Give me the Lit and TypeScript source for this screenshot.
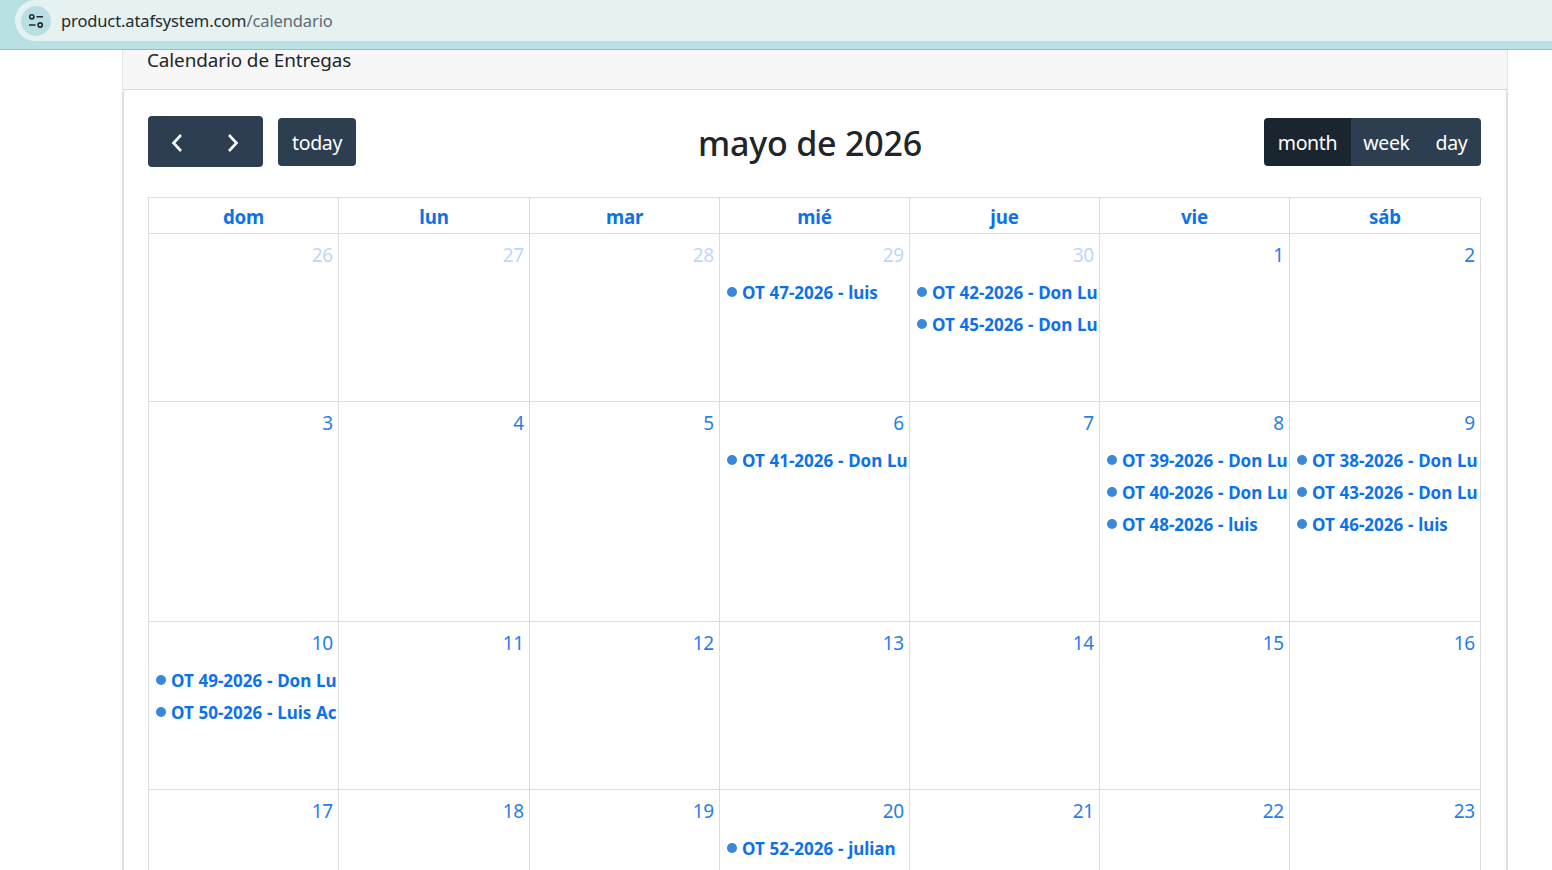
import { LitElement, html, css } from "lit";
import { customElement } from "lit/decorators.js";

type Cell = { d: number; other?: boolean; ev?: string[] };

const rows: { cls: string; cells: Cell[] }[] = [
  { cls: "short", cells: [
    { d: 26, other: true }, { d: 27, other: true }, { d: 28, other: true },
    { d: 29, other: true, ev: ["OT 47-2026 - luis"] },
    { d: 30, other: true, ev: ["OT 42-2026 - Don Lu", "OT 45-2026 - Don Lu"] },
    { d: 1 }, { d: 2 } ] },
  { cls: "tall", cells: [
    { d: 3 }, { d: 4 }, { d: 5 },
    { d: 6, ev: ["OT 41-2026 - Don Lu"] },
    { d: 7 },
    { d: 8, ev: ["OT 39-2026 - Don Lu", "OT 40-2026 - Don Lu", "OT 48-2026 - luis"] },
    { d: 9, ev: ["OT 38-2026 - Don Lu", "OT 43-2026 - Don Lu", "OT 46-2026 - luis"] } ] },
  { cls: "short", cells: [
    { d: 10, ev: ["OT 49-2026 - Don Lu", "OT 50-2026 - Luis Ac"] },
    { d: 11 }, { d: 12 }, { d: 13 }, { d: 14 }, { d: 15 }, { d: 16 } ] },
  { cls: "short", cells: [
    { d: 17 }, { d: 18 }, { d: 19 },
    { d: 20, ev: ["OT 52-2026 - julian"] },
    { d: 21 }, { d: 22 }, { d: 23 } ] },
];

const days = ["dom", "lun", "mar", "mié", "jue", "vie", "sáb"];

@customElement("app-root")
export class AppRoot extends LitElement {
  static styles = css`
    :host {
      display: block;
      height: 870px;
      overflow: hidden;
      background: #fff;
      font-family: "Noto Sans", "Open Sans", "Liberation Sans", sans-serif;
      color: #212529;
    }
    .chrome {
      height: 49px;
      background: #b9e0e3;
      border-bottom: 1px solid #9cbfc3;
      padding-left: 15px;
    }
    .omnibox {
      height: 41px;
      background: #e6f2f1;
      border-radius: 21px 0 0 21px;
      display: flex;
      align-items: center;
      padding-left: 6px;
      gap: 10px;
    }
    .site {
      width: 30px;
      height: 30px;
      border-radius: 50%;
      background: #b9dfe3;
      display: flex;
      align-items: center;
      justify-content: center;
    }
    .url {
      font-size: 16.5px;
      letter-spacing: -0.12px;
      color: #1f2a30;
    }
    .url span { color: #5f6b70; }
    .card {
      margin: 0 44px 0 122px;
    }
    .card-head {
      height: 39px;
      background: #f7f7f7;
      border: 1px solid #e6e6e6;
      border-top: none;
      border-bottom: 1px solid #dcdcdc;
      padding-left: 24px;
      font-size: 18.9px;
      line-height: 21px;
      letter-spacing: -0.1px;
      color: #212529;
    }
    .card-body {
      border: 2px solid #dfdfdf;
      border-top: none;
      border-bottom: none;
      border-radius: 4px 4px 0 0;
      padding: 26px 25px 0 24px;
    }
    .toolbar {
      display: flex;
      justify-content: space-between;
      align-items: center;
      height: 51px;
      margin-bottom: 30px;
    }
    .left { display: flex; align-items: center; gap: 15px; }
    .group {
      display: flex;
      border-radius: 4px;
      overflow: hidden;
    }
    .nav {
      width: 115px;
      height: 51px;
      background: #2c3e50;
      border-radius: 4px;
      display: flex;
      align-items: center;
      justify-content: space-between;
      padding: 2px 22px 0 21px;
      box-sizing: border-box;
    }
    .btn {
      height: 48px;
      background: #2c3e50;
      color: #fff;
      font-size: 19.5px;
      letter-spacing: -0.35px;
      padding-top: 1px;
      display: flex;
      align-items: center;
      justify-content: center;
      box-sizing: border-box;
    }
    .today { width: 78px; border-radius: 4px; }
    .month { width: 87px; background: #1a252f; }
    .week { width: 71px; }
    .day { width: 59px; }
    h2 {
      margin: 4px 0 0;
      font-size: 34px;
      font-weight: 500;
      letter-spacing: -0.2px;
      color: #212529;
      line-height: 1.2;
    }
    .cal {
      border-top: 1px solid #ddd;
      border-left: 1px solid #ddd;
    }
    .row {
      display: grid;
      grid-template-columns: 190px 191px 190px 190px 190px 190px 191px;
    }
    .short { height: 168px; }
    .tall { height: 220px; }
    .th, .td {
      border-right: 1px solid #ddd;
      border-bottom: 1px solid #ddd;
      min-width: 0;
      box-sizing: border-box;
    }
    .th {
      height: 36px;
      overflow: hidden;
      color: #0d72e8;
      font-weight: 700;
      font-size: 18.7px;
      letter-spacing: -0.2px;
      line-height: 38px;
      text-align: center;
    }
    .num {
      text-align: right;
      font-size: 19px;
      letter-spacing: -0.2px;
      line-height: 26px;
      padding: 8px 5px 0 0;
      height: 34px;
      color: #0d72e8;
      opacity: 0.9;
    }
    .other .num { opacity: 0.28; }
    .ev {
      display: flex;
      align-items: center;
      height: 32px;
      padding-left: 7px;
      overflow: hidden;
      white-space: nowrap;
      color: #0d72e8;
      font-size: 17px;
      font-weight: 700;
      letter-spacing: -0.02px;
      word-spacing: 0.4px;
    }
    .dot {
      flex: none;
      width: 10px;
      height: 10px;
      border-radius: 50%;
      background: #3a87dc;
      margin-right: 5px;
    }
  `;

  render() {
    return html`
      <div class="chrome">
        <div class="omnibox">
          <div class="site">
            <svg width="18" height="18" viewBox="0 0 18 18" fill="none" stroke="#1f2a30" stroke-width="1.6">
              <circle cx="4.8" cy="4.8" r="2.1"></circle>
              <path d="M9.5 4.8H16M2 13H8.5"></path>
              <circle cx="13.2" cy="13" r="2.1"></circle>
            </svg>
          </div>
          <div class="url">product.atafsystem.com<span>/calendario</span></div>
        </div>
      </div>
      <div class="card">
        <div class="card-head">Calendario de Entregas</div>
        <div class="card-body">
          <div class="toolbar">
            <div class="left">
              <div class="nav">
                <svg width="16" height="20" viewBox="0 0 16 20" fill="none" stroke="#fff" stroke-width="2.6">
                  <path d="M12 2 4.5 10l7.5 8"></path>
                </svg>
                <svg width="16" height="20" viewBox="0 0 16 20" fill="none" stroke="#fff" stroke-width="2.6">
                  <path d="M4 2 11.5 10 4 18"></path>
                </svg>
              </div>
              <div class="btn today">today</div>
            </div>
            <h2>mayo de 2026</h2>
            <div class="group">
              <div class="btn month">month</div>
              <div class="btn week">week</div>
              <div class="btn day">day</div>
            </div>
          </div>
          <div class="cal">
            <div class="row">
              ${days.map((d) => html`<div class="th">${d}</div>`)}
            </div>
            ${rows.map(
              (r) => html`
                <div class="row ${r.cls}">
                  ${r.cells.map(
                    (c) => html`
                      <div class="td ${c.other ? "other" : ""}">
                        <div class="num">${c.d}</div>
                        ${(c.ev ?? []).map(
                          (e) => html`<div class="ev"><span class="dot"></span>${e}</div>`
                        )}
                      </div>
                    `
                  )}
                </div>
              `
            )}
          </div>
        </div>
      </div>
    `;
  }
}
